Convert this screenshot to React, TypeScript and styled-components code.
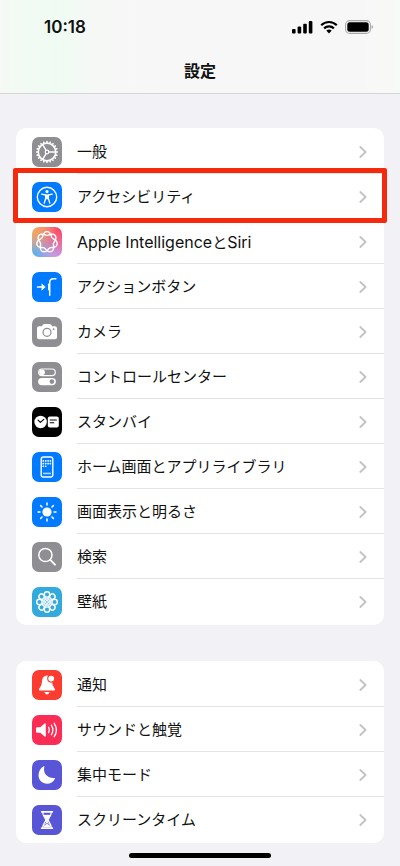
import React from "react";
import styled, { createGlobalStyle } from "styled-components";

const GlobalStyle = createGlobalStyle`
  *, *::before, *::after { box-sizing: border-box; }
  body {
    margin: 0;
    background: #f1f1f6;
    color: #111;
    font-family: Inter, "Noto Sans CJK JP", sans-serif;
    -webkit-font-smoothing: antialiased;
  }
`;

const Screen = styled.div`
  min-height: 100vh;
  display: flex;
  flex-direction: column;
`;

const Header = styled.header`
  border-bottom: 1px solid #d5d5da;
  background: linear-gradient(90deg, #f6f9f5 0, #f2faf3 5%, #effbf2 14%, #f6f8f6 24%, #f7f7f7 40%, #f7f7f7 90%, #f8faf7 100%) padding-box;
`;

const StatusBar = styled.div`
  display: flex;
  align-items: center;
  justify-content: space-between;
  height: 54px;
  padding: 0 27px 0 44px;
`;

const Time = styled.time`
  font-size: 17px;
  line-height: 20px;
  font-weight: 600;
`;

const StatusIcons = styled.div`
  display: flex;
  align-items: center;
  gap: 7px;

  svg { display: block; }
`;

const Title = styled.h1`
  margin: 0;
  padding: 5px 0 10px;
  text-align: center;
  font-size: 16px;
  line-height: 24px;
  font-weight: 700;
`;

const Main = styled.main`
  display: flex;
  flex-direction: column;
  gap: 36px;
  padding: 34px 16px 0;
`;

const Group = styled.ul`
  list-style: none;
  margin: 0;
  padding: 1px 0;
  border-radius: 10px;
  background: #fff;
`;

const Item = styled.li`
  position: relative;
`;

const Highlight = styled.span`
  position: absolute;
  inset: -6px -3px -4px;
  border: 5px solid #f52a0c;
  border-radius: 2px;
  pointer-events: none;
  z-index: 1;
`;

const RowLink = styled.a`
  display: flex;
  align-items: center;
  gap: 15px;
  padding-left: 16px;
  height: 45px;
  color: inherit;
  text-decoration: none;
`;

const RowBody = styled.span`
  flex: 1;
  align-self: stretch;
  display: flex;
  align-items: center;
  justify-content: space-between;
  padding: 2px 17px 0 0;
  border-bottom: 1px solid #e4e4e6;

  ${Item}:last-child & { border-bottom-color: transparent; }
`;

const Label = styled.span`
  font-size: 15px;
  line-height: 22px;
`;

const Latin = styled.span`
  font-size: 16px;
`;

const Tile = styled.span<{ $bg: string }>`
  flex: none;
  width: 30px;
  height: 30px;
  border-radius: 7px;
  background: ${(p) => p.$bg};
  color: #fff;
  overflow: hidden;

  svg { display: block; }
`;

const HomeIndicator = styled.div`
  width: 142px;
  height: 5px;
  margin: 10px auto 8px;
  border-radius: 3px;
  background: #000;
`;

const turns = (n: number) => Array.from({ length: n }, (_, i) => (360 / n) * i);

const knot =
  Array.from({ length: 281 }, (_, i) => {
    const t = (i / 280) * Math.PI * 4;
    const r = 8.5 + 1.9 * Math.cos(3.5 * t);
    const x = 15 + r * Math.sin(t);
    const y = 15 - r * Math.cos(t);
    return `${i ? "L" : "M"}${x.toFixed(2)} ${y.toFixed(2)}`;
  }).join("") + "Z";

const Glyph = ({ children }: { children: React.ReactNode }) => (
  <svg
    width="30"
    height="30"
    viewBox="0 0 30 30"
    fill="none"
    stroke="currentColor"
    strokeLinecap="round"
    strokeLinejoin="round"
    aria-hidden="true"
  >
    {children}
  </svg>
);

const Gear = () => (
  <Glyph>
    <circle cx="15" cy="15" r="8.8" strokeWidth="1.7" />
    {turns(20).map((a) => (
      <path key={a} d="M15 5.4V4.6" strokeWidth="1.5" transform={`rotate(${a} 15 15)`} />
    ))}
    <circle cx="15" cy="15" r="1.8" strokeWidth="1.2" />
    {turns(3).map((a) => (
      <path key={a} d="M16.8 15H23.6" strokeWidth="1.4" transform={`rotate(${a} 15 15)`} />
    ))}
  </Glyph>
);

const Accessibility = () => (
  <Glyph>
    <circle cx="15" cy="15" r="9.7" strokeWidth="1.4" />
    <circle cx="15" cy="9.6" r="1.6" fill="currentColor" stroke="none" />
    <path d="M9.7 12.2 13.7 13V16.2L12.2 21.2M20.3 12.2 16.3 13V16.2L17.8 21.2" strokeWidth="1.3" />
    <path d="M13.4 12.5H16.6V16.8L15 17.4 13.4 16.8Z" fill="currentColor" stroke="none" />
  </Glyph>
);

const Intelligence = () => (
  <Glyph>
    <path d={knot} strokeWidth="1.4" />
  </Glyph>
);

const ActionButton = () => (
  <Glyph>
    <path d="M5.5 15H11" strokeWidth="1.6" />
    <path d="M10 12.1 13.3 15 10 17.9Z" fill="currentColor" strokeWidth=".6" />
    <path d="M23.9 6.8H21.4Q17.7 6.8 17.7 10.6V23.2" strokeWidth="1.5" />
    <path d="M16.8 12.2V17.8" strokeWidth="1.5" />
  </Glyph>
);

const Camera = () => (
  <Glyph>
    <path
      d="M7 9.3H9.8L11.1 7.6Q11.5 7 12.2 7H17.8Q18.5 7 18.9 7.6L20.2 9.3H23Q25 9.3 25 11.3V20.2Q25 22.2 23 22.2H7Q5 22.2 5 20.2V11.3Q5 9.3 7 9.3Z"
      fill="currentColor"
      stroke="none"
    />
    <circle cx="15" cy="15.3" r="4" stroke="#8e8e93" strokeWidth="1.2" />
    <circle cx="21.6" cy="12.2" r=".9" fill="#8e8e93" stroke="none" />
  </Glyph>
);

const Switches = () => (
  <Glyph>
    <rect x="6.7" y="7" width="16.6" height="6.6" rx="3.3" strokeWidth="1.2" />
    <circle cx="10.1" cy="10.3" r="2.8" fill="currentColor" stroke="none" />
    <rect x="6.1" y="15.9" width="17.8" height="7.4" rx="3.7" fill="currentColor" stroke="none" />
    <circle cx="19.9" cy="19.6" r="2.3" fill="#8e8e93" stroke="none" />
  </Glyph>
);

const StandBy = () => (
  <Glyph>
    <circle cx="8.6" cy="15" r="6.2" fill="currentColor" stroke="none" />
    <path d="M6 13.2 8.4 15.4 11.8 12.3" stroke="#000" strokeWidth="1.1" />
    <rect x="15.8" y="9.4" width="11" height="11" rx="2" fill="currentColor" stroke="none" />
    <path d="M18.2 13H24.4M18.2 15.7H21.8" stroke="#000" strokeWidth="1.1" />
  </Glyph>
);

const HomeScreen = () => (
  <Glyph>
    <rect x="9.2" y="5" width="11.6" height="20" rx="2.2" strokeWidth="1.4" />
    {[8, 10.7, 13.4].map((y, row) =>
      [11.3, 13.7, 16.1, 18.4].slice(0, row === 2 ? 2 : 4).map((x) => (
        <rect key={`${x}-${y}`} x={x - 0.8} y={y} width="1.6" height="1.7" rx=".4" fill="currentColor" stroke="none" />
      ))
    )}
    {[12, 14, 16, 18].map((x) => (
      <rect key={x} x={x - 0.7} y="20.6" width="1.4" height="1.7" rx=".4" fill="currentColor" stroke="none" />
    ))}
  </Glyph>
);

const Brightness = () => (
  <Glyph>
    <circle cx="15" cy="15" r="4.6" fill="currentColor" stroke="none" />
    {turns(8).map((a) => (
      <path key={a} d="M15 8V6" strokeWidth="1.5" transform={`rotate(${a} 15 15)`} />
    ))}
  </Glyph>
);

const Search = () => (
  <Glyph>
    <circle cx="13.4" cy="13" r="6.6" strokeWidth="1.5" />
    <path d="M18.3 17.9 23 22.6" strokeWidth="2" />
  </Glyph>
);

const Wallpaper = () => (
  <Glyph>
    {turns(8).map((a) => (
      <g key={a} transform={`rotate(${a} 15 15)`}>
        <circle cx="15" cy="7.4" r="2.7" strokeWidth="1.4" />
        <path d="M15 15 12.8 10.9M15 15 17.2 10.9" strokeWidth=".8" />
      </g>
    ))}
    <circle cx="15" cy="15" r="3.4" strokeWidth=".9" />
    <circle cx="15" cy="15" r="1.3" fill="#34aadc" strokeWidth=".8" />
  </Glyph>
);

const Bell = () => (
  <Glyph>
    <path
      d="M15 5.5Q19.8 6 20 11.5Q20.1 15.8 22.6 18.6Q23.9 20.6 21.6 20.6H8.4Q6.1 20.6 7.4 18.6Q9.9 15.8 10 11.5Q10.2 6 15 5.5Z"
      fill="currentColor"
      stroke="none"
    />
    <path d="M12.4 22H17.6Q17 24.4 15 24.4T12.4 22Z" fill="currentColor" stroke="none" />
    <circle cx="19.2" cy="8.6" r="3.5" fill="currentColor" stroke="#fc3c30" strokeWidth="1.1" />
  </Glyph>
);

const Speaker = () => (
  <Glyph>
    <path
      d="M5 12.3H8.3L12.6 8.5Q13.8 7.7 13.8 9.2V20.8Q13.8 22.3 12.6 21.5L8.3 17.7H5Q4 17.7 4 16.7V13.3Q4 12.3 5 12.3Z"
      fill="currentColor"
      stroke="none"
    />
    <path d="M16.6 12.4Q18.2 15 16.6 17.6M19.4 10.3Q22.4 15 19.4 19.7M22.2 8.3Q26.6 15 22.2 21.7" strokeWidth="1.3" />
  </Glyph>
);

const Moon = () => (
  <Glyph>
    <path
      d="M12.4 6.5C10.7 12.6 14.8 18.4 22.4 17.9C23 17.9 23.2 18.3 22.9 18.8C21.2 22 18.5 23.8 15.1 23.8C10.2 23.8 6.5 20.2 6.5 15.3C6.5 11.4 8.6 8 11.7 6.3C12.2 6 12.6 6.1 12.4 6.5Z"
      fill="currentColor"
      stroke="none"
    />
  </Glyph>
);

const Hourglass = () => (
  <Glyph>
    <path d="M9.7 6.8H20.3M9.7 23.2H20.3" strokeWidth="1.8" />
    <path d="M10.8 7.5C10.8 11.7 13.8 13 13.8 15S10.8 18.3 10.8 22.5M19.2 7.5C19.2 11.7 16.2 13 16.2 15S19.2 18.3 19.2 22.5" strokeWidth="1.3" />
    <path d="M11.2 9.8H18.8Q18.2 11.8 15.9 13.6V17.8L18.2 20.3V22H11.8V20.3L14.1 17.8V13.6Q11.8 11.8 11.2 9.8Z" fill="currentColor" stroke="none" />
    <path d="M12 9H18M12.8 20.2 15 18.2 17.2 20.2" stroke="#5856d6" strokeWidth=".7" />
  </Glyph>
);

const Chevron = () => (
  <svg width="8" height="12" viewBox="0 0 8 12" fill="none" stroke="#c2c2c5" strokeWidth="1.8" strokeLinecap="round" strokeLinejoin="round" aria-hidden="true">
    <path d="M1.3 1 6.6 6 1.3 11" />
  </svg>
);

const gray = "#8e8e93";
const blue = "#007aff";
const rainbow =
  "radial-gradient(circle at 0% 0%, #f8a84e 0, rgba(248,168,78,0) 60%), radial-gradient(circle at 100% 0%, #fb3c62 0, rgba(251,60,98,0) 72%), radial-gradient(circle at 100% 100%, #c79af5 0, rgba(199,154,245,0) 65%), radial-gradient(circle at 10% 100%, #4db2f2 0, rgba(77,178,242,0) 75%), #ef9fae";

type Setting = {
  id: string;
  label: React.ReactNode;
  bg: string;
  icon: React.ReactNode;
  highlighted?: boolean;
};

const groups: Setting[][] = [
  [
    { id: "general", label: "一般", bg: gray, icon: <Gear /> },
    { id: "accessibility", label: "アクセシビリティ", bg: blue, icon: <Accessibility />, highlighted: true },
    {
      id: "intelligence",
      label: (
        <>
          <Latin>Apple Intelligence</Latin>と<Latin>Siri</Latin>
        </>
      ),
      bg: rainbow,
      icon: <Intelligence />,
    },
    { id: "action-button", label: "アクションボタン", bg: blue, icon: <ActionButton /> },
    { id: "camera", label: "カメラ", bg: gray, icon: <Camera /> },
    { id: "control-center", label: "コントロールセンター", bg: gray, icon: <Switches /> },
    { id: "standby", label: "スタンバイ", bg: "#000", icon: <StandBy /> },
    { id: "home-screen", label: "ホーム画面とアプリライブラリ", bg: blue, icon: <HomeScreen /> },
    { id: "display", label: "画面表示と明るさ", bg: blue, icon: <Brightness /> },
    { id: "search", label: "検索", bg: gray, icon: <Search /> },
    { id: "wallpaper", label: "壁紙", bg: "#34aadc", icon: <Wallpaper /> },
  ],
  [
    { id: "notifications", label: "通知", bg: "#fc3c30", icon: <Bell /> },
    { id: "sounds", label: "サウンドと触覚", bg: "#fc2d55", icon: <Speaker /> },
    { id: "focus", label: "集中モード", bg: "#5856d6", icon: <Moon /> },
    { id: "screen-time", label: "スクリーンタイム", bg: "#5856d6", icon: <Hourglass /> },
  ],
];

const SettingRow = ({ id, label, bg, icon, highlighted }: Setting) => (
  <Item>
    <RowLink href={`#${id}`}>
      <Tile $bg={bg}>{icon}</Tile>
      <RowBody>
        <Label>{label}</Label>
        <Chevron />
      </RowBody>
    </RowLink>
    {highlighted && <Highlight />}
  </Item>
);

const Signal = () => (
  <svg width="21" height="14" viewBox="0 0 21 14" aria-hidden="true">
    <rect x="0" y="9" width="3.6" height="4.5" rx="1" />
    <rect x="5.6" y="6.5" width="3.6" height="7" rx="1" />
    <rect x="11.2" y="3.8" width="3.6" height="9.7" rx="1" />
    <rect x="16.8" y="1" width="3.6" height="12.5" rx="1" />
  </svg>
);

const Wifi = () => (
  <svg width="18" height="14" viewBox="0 0 18 14" fill="none" stroke="#000" strokeWidth="2.2" aria-hidden="true">
    <path d="M1.2 5.2Q4.5 2 9 2T16.8 5.2" />
    <path d="M4.1 8.4Q6.2 6.4 9 6.4T13.9 8.4" />
    <path d="M6.3 10.6Q9 8.6 11.7 10.6L9 13.4Z" fill="#000" stroke="none" />
  </svg>
);

const Battery = () => (
  <svg width="28" height="14" viewBox="0 0 28 14" aria-hidden="true">
    <rect x=".6" y=".6" width="24.8" height="12.8" rx="4" fill="none" stroke="#a9a9ab" strokeWidth="1.1" />
    <rect x="2.3" y="2.3" width="21.4" height="9.4" rx="2.5" />
    <path d="M26.6 5V9Q28 8.5 28 7T26.6 5Z" fill="#a0a0a2" />
  </svg>
);

export default function App() {
  return (
    <Screen>
      <GlobalStyle />
      <Header>
        <StatusBar>
          <Time>10:18</Time>
          <StatusIcons>
            <Signal />
            <Wifi />
            <Battery />
          </StatusIcons>
        </StatusBar>
        <Title>設定</Title>
      </Header>
      <Main>
        {groups.map((group) => (
          <Group key={group[0].id}>
            {group.map((setting) => (
              <SettingRow key={setting.id} {...setting} />
            ))}
          </Group>
        ))}
      </Main>
      <HomeIndicator />
    </Screen>
  );
}
